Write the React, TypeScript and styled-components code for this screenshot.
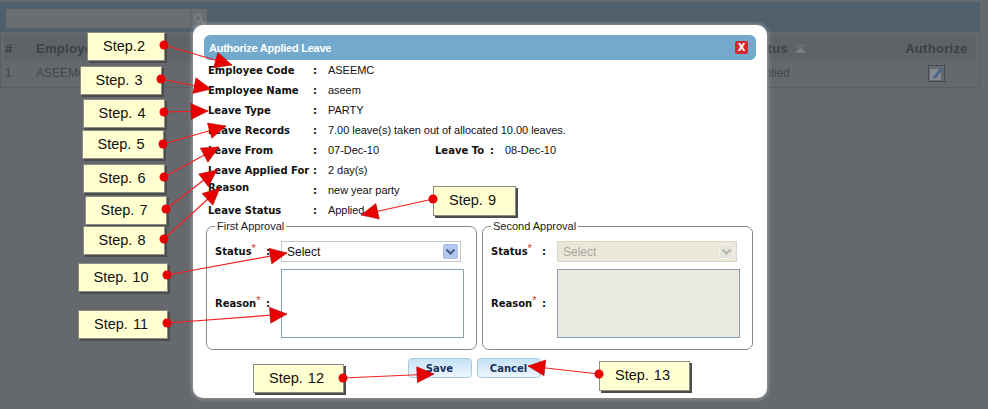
import * as React from 'react';
import styled, {createGlobalStyle} from 'styled-components';

const GlobalStyle = createGlobalStyle`
  html, body {
    margin: 0;
    padding: 0;
    background: #65696d;
    overflow: hidden;
  }
  * {
    box-sizing: border-box;
  }
`;

interface Step {
  label: string;
  x: number;
  y: number;
  w: number;
  h: number;
  dot: [number, number];
  tip: [number, number];
}

const steps: Step[] = [
  {label: 'Step.2', x: 87, y: 32, w: 78, h: 29, dot: [164, 45], tip: [232, 65]},
  {label: 'Step. 3', x: 80, y: 66, w: 82, h: 29, dot: [161, 79], tip: [211, 89]},
  {label: 'Step. 4', x: 83, y: 99, w: 82, h: 29, dot: [164, 112], tip: [208, 111]},
  {label: 'Step. 5', x: 82, y: 130, w: 82, h: 29, dot: [163, 144], tip: [226, 126]},
  {label: 'Step. 6', x: 83, y: 164, w: 82, h: 29, dot: [164, 177], tip: [219, 147]},
  {label: 'Step. 7', x: 85, y: 196, w: 82, h: 29, dot: [166, 209], tip: [217, 170]},
  {label: 'Step. 8', x: 83, y: 226, w: 82, h: 29, dot: [164, 239], tip: [220, 188]},
  {label: 'Step. 9', x: 433, y: 186, w: 83, h: 30, dot: [433, 199], tip: [361, 215]},
  {label: 'Step. 10', x: 78, y: 263, w: 90, h: 29, dot: [167, 275], tip: [287, 253]},
  {label: 'Step. 11', x: 78, y: 310, w: 90, h: 29, dot: [167, 323], tip: [287, 314]},
  {label: 'Step. 12', x: 253, y: 364, w: 91, h: 29, dot: [343, 378], tip: [434, 374]},
  {label: 'Step. 13', x: 599, y: 361, w: 91, h: 30, dot: [599, 374], tip: [528, 366]},
];

const arrowHead = (dot: [number, number], tip: [number, number]) => {
  const dx = tip[0] - dot[0];
  const dy = tip[1] - dot[1];
  const len = Math.sqrt(dx * dx + dy * dy);
  const ux = dx / len;
  const uy = dy / len;
  const bx = tip[0] - ux * 17;
  const by = tip[1] - uy * 17;
  const a = `${bx - uy * 8},${by + ux * 8}`;
  const b = `${bx + uy * 8},${by - ux * 8}`;
  return `${tip[0]},${tip[1]} ${a} ${b}`;
};

const App: React.FC = () => (
  <>
    <GlobalStyle />
    <Page>
      <SearchBand>
        <SearchInput />
        <SearchButton>
          <svg width="12" height="12" viewBox="0 0 12 12">
            <circle cx="5" cy="5" r="3.5" fill="none" stroke="#7a7f83" strokeWidth="2" />
            <path d="M7.5 7.5L11 11" stroke="#7a7f83" strokeWidth="2" />
          </svg>
        </SearchButton>
      </SearchBand>
      <GridTable>
        <HeadRow>
          <HeadCell width={30}>#</HeadCell>
          <HeadCell width={150}>Employee Code</HeadCell>
          <StatusHead>
            Status
            <SortMark viewBox="0 0 13 9" width="13" height="9">
              <path d="M1 9L6.5 3 12 9z" fill="#7b7f83" />
              <path d="M1 0h11L6.5 5z" fill="#686c70" />
            </SortMark>
          </StatusHead>
          <HeadCell width={77} centered>Authorize</HeadCell>
        </HeadRow>
        <BodyRow>
          <BodyCell width={30}>1</BodyCell>
          <BodyCell width={150}>ASEEMC</BodyCell>
          <StatusCell>Applied</StatusCell>
          <BodyCell width={77} centered>
            <EditIcon>
              <svg width="15" height="15" viewBox="0 0 15 15">
                <rect x="1" y="3" width="11" height="11" fill="#858b90" />
                <path d="M4 11L12 1l2 2-7 9-3 1z" fill="#4c6488" />
              </svg>
            </EditIcon>
          </BodyCell>
        </BodyRow>
      </GridTable>

      <Modal>
        <TitleBar>
          <Title>Authorize Applied Leave</Title>
          <CloseButton>X</CloseButton>
        </TitleBar>
        <Details>
          <InfoRow><Label>Employee Code</Label><Colon>:</Colon><Value>ASEEMC</Value></InfoRow>
          <InfoRow><Label>Employee Name</Label><Colon>:</Colon><Value>aseem</Value></InfoRow>
          <InfoRow><Label>Leave Type</Label><Colon>:</Colon><Value>PARTY</Value></InfoRow>
          <InfoRow><Label>Leave Records</Label><Colon>:</Colon><Value>7.00 leave(s) taken out of allocated 10.00 leaves.</Value></InfoRow>
          <InfoRow>
            <Label>Leave From</Label><Colon>:</Colon><DateValue>07-Dec-10</DateValue>
            <ToLabel>Leave To</ToLabel><Colon>:</Colon><Value>08-Dec-10</Value>
          </InfoRow>
          <InfoRow><Label>Leave Applied For</Label><Colon>:</Colon><Value>2 day(s)</Value></InfoRow>
          <InfoRow><Label raised>Reason</Label><Colon>:</Colon><Value>new year party</Value></InfoRow>
          <InfoRow><Label>Leave Status</Label><Colon>:</Colon><Value>Applied</Value></InfoRow>
        </Details>
        <Approvals>
          <ApprovalBox>
            <Legend>First Approval</Legend>
            <StatusLine>
              <FieldLabel>Status<Star>*</Star></FieldLabel>
              <FieldColon>:</FieldColon>
              <SelectBox>
                <span>Select</span>
                <SelectArrow>
                  <svg width="11" height="8" viewBox="0 0 11 8">
                    <path d="M1.5 1.5L5.5 5.5L9.5 1.5" fill="none" stroke="#4d6185" strokeWidth="2.2" />
                  </svg>
                </SelectArrow>
              </SelectBox>
            </StatusLine>
            <ReasonLine>
              <FieldLabel>Reason<Star>*</Star></FieldLabel>
              <FieldColon>:</FieldColon>
              <ReasonInput />
            </ReasonLine>
          </ApprovalBox>
          <ApprovalBox>
            <Legend>Second Approval</Legend>
            <StatusLine>
              <FieldLabel>Status<Star>*</Star></FieldLabel>
              <FieldColon>:</FieldColon>
              <SelectBox disabled>
                <span>Select</span>
                <SelectArrow disabled>
                  <svg width="11" height="8" viewBox="0 0 11 8">
                    <path d="M1.5 1.5L5.5 5.5L9.5 1.5" fill="none" stroke="#b5b5ad" strokeWidth="2.2" />
                  </svg>
                </SelectArrow>
              </SelectBox>
            </StatusLine>
            <ReasonLine>
              <FieldLabel>Reason<Star>*</Star></FieldLabel>
              <FieldColon>:</FieldColon>
              <ReasonInput disabled />
            </ReasonLine>
          </ApprovalBox>
        </Approvals>
        <Buttons>
          <ActionButton>Save</ActionButton>
          <ActionButton>Cancel</ActionButton>
        </Buttons>
      </Modal>

      {steps.map(s => (
        <Callout key={s.label} style={{left: s.x, top: s.y, width: s.w, height: s.h}}>{s.label}</Callout>
      ))}
      <Arrows width="988" height="409" viewBox="0 0 988 409">
        {steps.map(s => (
          <g key={s.label}>
            <line x1={s.dot[0]} y1={s.dot[1]} x2={s.tip[0]} y2={s.tip[1]} stroke="#f42020" strokeWidth="1.2" />
            <polygon points={arrowHead(s.dot, s.tip)} fill="#e80000" stroke="#a80000" strokeWidth="0.5" />
            <circle cx={s.dot[0]} cy={s.dot[1]} r="4.5" fill="#e80000" />
          </g>
        ))}
      </Arrows>
    </Page>
  </>
);

export default App;

const Page = styled.div`
  position: relative;
  width: 988px;
  height: 409px;
  overflow: hidden;
  background: #65696d;
  padding-top: 2px;
  font-family: "Liberation Sans", Arial, sans-serif;
`;

const SearchBand = styled.div`
  width: 980px;
  height: 30px;
  background: #4f5f6b;
  display: flex;
  align-items: flex-start;
  padding: 7px 0 0 6px;
`;

const SearchInput = styled.div`
  width: 184px;
  height: 19px;
  background: #6a6e71;
`;

const SearchButton = styled.div`
  width: 17px;
  height: 19px;
  background: #6a6e71;
  border-left: 1px solid #5b6064;
  display: flex;
  align-items: center;
  justify-content: center;
`;

const GridTable = styled.div`
  width: 980px;
  height: 55px;
  margin-top: 1px;
  padding: 3px 3px 0;
  border: 1px solid #5a5e62;
  border-top: none;
  color: #3c4044;
`;

const HeadRow = styled.div`
  display: flex;
  height: 24px;
  background: #5f6367;
  font-size: 13px;
  font-weight: bold;
  letter-spacing: 0.3px;
`;

const BodyRow = styled.div`
  display: flex;
  height: 26px;
  font-size: 11px;
  color: #44484c;
`;

const HeadCell = styled.div<{width?: number; centered?: boolean}>`
  width: ${p => (p.width ? `${p.width}px` : 'auto')};
  flex: none;
  display: flex;
  align-items: center;
  justify-content: ${p => (p.centered ? 'center' : 'flex-start')};
  padding-left: ${p => (p.centered ? 0 : 1)}px;
  margin-right: 1px;
`;

const StatusHead = styled.div`
  flex: 1;
  display: flex;
  align-items: center;
  justify-content: flex-end;
  gap: 6px;
  padding-right: 91px;
`;

const SortMark = styled.svg`
  flex: none;
`;

const BodyCell = styled(HeadCell)`
  font-size: 12px;
`;

const StatusCell = styled.div`
  flex: 1;
  display: flex;
  align-items: center;
  justify-content: flex-end;
  padding-right: 108px;
  font-size: 12px;
`;

const EditIcon = styled.div`
  width: 17px;
  height: 17px;
  border: 1px dotted #2c2f33;
  display: flex;
  align-items: center;
  justify-content: center;
  overflow: hidden;
`;

const Modal = styled.div`
  position: absolute;
  left: 193px;
  top: 25px;
  width: 574px;
  height: 373px;
  background: #fff;
  border-radius: 10px;
  box-shadow: 0 0 4px 1px rgba(200, 200, 200, 0.55);
  padding: 10px 11px 0 11px;
`;

const TitleBar = styled.div`
  height: 25px;
  background: #73a9cc;
  border-radius: 6px;
  display: flex;
  align-items: center;
  justify-content: space-between;
  padding: 0 8px 0 5px;
`;

const Title = styled.div`
  color: #fff;
  font-size: 11px;
  font-weight: bold;
  letter-spacing: -0.25px;
`;

const CloseButton = styled.div`
  width: 13px;
  height: 13px;
  border-radius: 2px;
  background: #d2282c;
  color: #fff;
  font: bold 10px/13px "DejaVu Sans", sans-serif;
  text-align: center;
`;

const Details = styled.div`
  padding: 0 0 0 4px;
`;

const InfoRow = styled.div`
  display: flex;
  height: 20px;
  align-items: center;
  font-size: 11px;
  color: #111;
`;

const Label = styled.div<{raised?: boolean}>`
  width: 105px;
  align-self: ${p => (p.raised ? 'flex-start' : 'center')};
  margin-top: ${p => (p.raised ? '2px' : '0')};
  font: bold 10px "DejaVu Sans", sans-serif;
  white-space: nowrap;
`;

const Colon = styled.div`
  width: 15px;
  font: bold 10px "DejaVu Sans", sans-serif;
`;

const Value = styled.div`
  font-size: 11px;
  letter-spacing: -0.04px;
`;

const DateValue = styled(Value)`
  width: 107px;
`;

const ToLabel = styled(Label)`
  width: 55px;
`;

const Approvals = styled.div`
  display: flex;
  gap: 5px;
  padding-left: 2px;
`;

const ApprovalBox = styled.fieldset`
  width: 271px;
  height: 130px;
  margin: 0;
  padding: 0 0 0 8px;
  border: 1px solid #8a8a80;
  border-radius: 7px;
`;

const Legend = styled.legend`
  padding: 0 2px;
  margin-left: 0;
  font-size: 11px;
  color: #222;
`;

const StatusLine = styled.div`
  display: flex;
  align-items: center;
  margin-top: 9px;
  height: 21px;
`;

const ReasonLine = styled.div`
  display: flex;
  align-items: center;
  margin-top: 7px;
  height: 69px;
`;

const FieldLabel = styled.div`
  width: 41px;
  font: bold 10px/12px "DejaVu Sans", sans-serif;
  color: #111;
  white-space: nowrap;
`;

const Star = styled.span`
  color: #c83030;
  font: normal 11px/0 "Liberation Sans", sans-serif;
  vertical-align: 3px;
`;

const FieldColon = styled.div`
  width: 25px;
  padding-left: 10px;
  font: bold 10px/12px "DejaVu Sans", sans-serif;
  color: #111;
`;

const SelectBox = styled.div<{disabled?: boolean}>`
  width: 180px;
  height: 21px;
  border: 1px solid ${p => (p.disabled ? '#d8d6c6' : '#c6c6c6')};
  background: ${p => (p.disabled ? '#ebe8da' : '#fff')};
  color: ${p => (p.disabled ? '#a8a8a0' : '#111')};
  font-size: 12px;
  display: flex;
  align-items: center;
  justify-content: space-between;
  padding: 0 2px 0 5px;
`;

const SelectArrow = styled.div<{disabled?: boolean}>`
  width: 15px;
  height: 15px;
  border-radius: 2px;
  background: ${p => (p.disabled ? '#e6e5dd' : '#b4c9f2')};
  border: 1px solid ${p => (p.disabled ? '#f2f2ec' : '#a9bfe8')};
  display: flex;
  align-items: center;
  justify-content: center;
`;

const ReasonInput = styled.textarea`
  display: block;
  width: 183px;
  height: 69px;
  margin: 0;
  padding: 2px;
  resize: none;
  border: 1px solid #8a9fb5;
  border-radius: 0;
  outline: none;
  background: ${p => (p.disabled ? '#e9e8e1' : '#fff')};
`;

const Buttons = styled.div`
  display: flex;
  justify-content: center;
  gap: 5px;
  margin-top: 8px;
  padding-right: 12px;
`;

const ActionButton = styled.button`
  width: 64px;
  height: 20px;
  padding: 0;
  border: 1px solid #a8cbdf;
  border-radius: 4px;
  background: linear-gradient(#c4e2f6, #eef7fd);
  color: #16305c;
  font: bold 10px "DejaVu Sans", sans-serif;
`;

const Callout = styled.div`
  position: absolute;
  background: #ffffd2;
  border: 1px solid #8c8c80;
  box-shadow: 2px 2px 0 #4a4c4e;
  font-size: 14.5px;
  word-spacing: 1px;
  color: #111;
  display: flex;
  align-items: center;
  justify-content: center;
  padding: 0 4px 2px 0;
`;

const Arrows = styled.svg`
  position: absolute;
  left: 0;
  top: 0;
  pointer-events: none;
`;
